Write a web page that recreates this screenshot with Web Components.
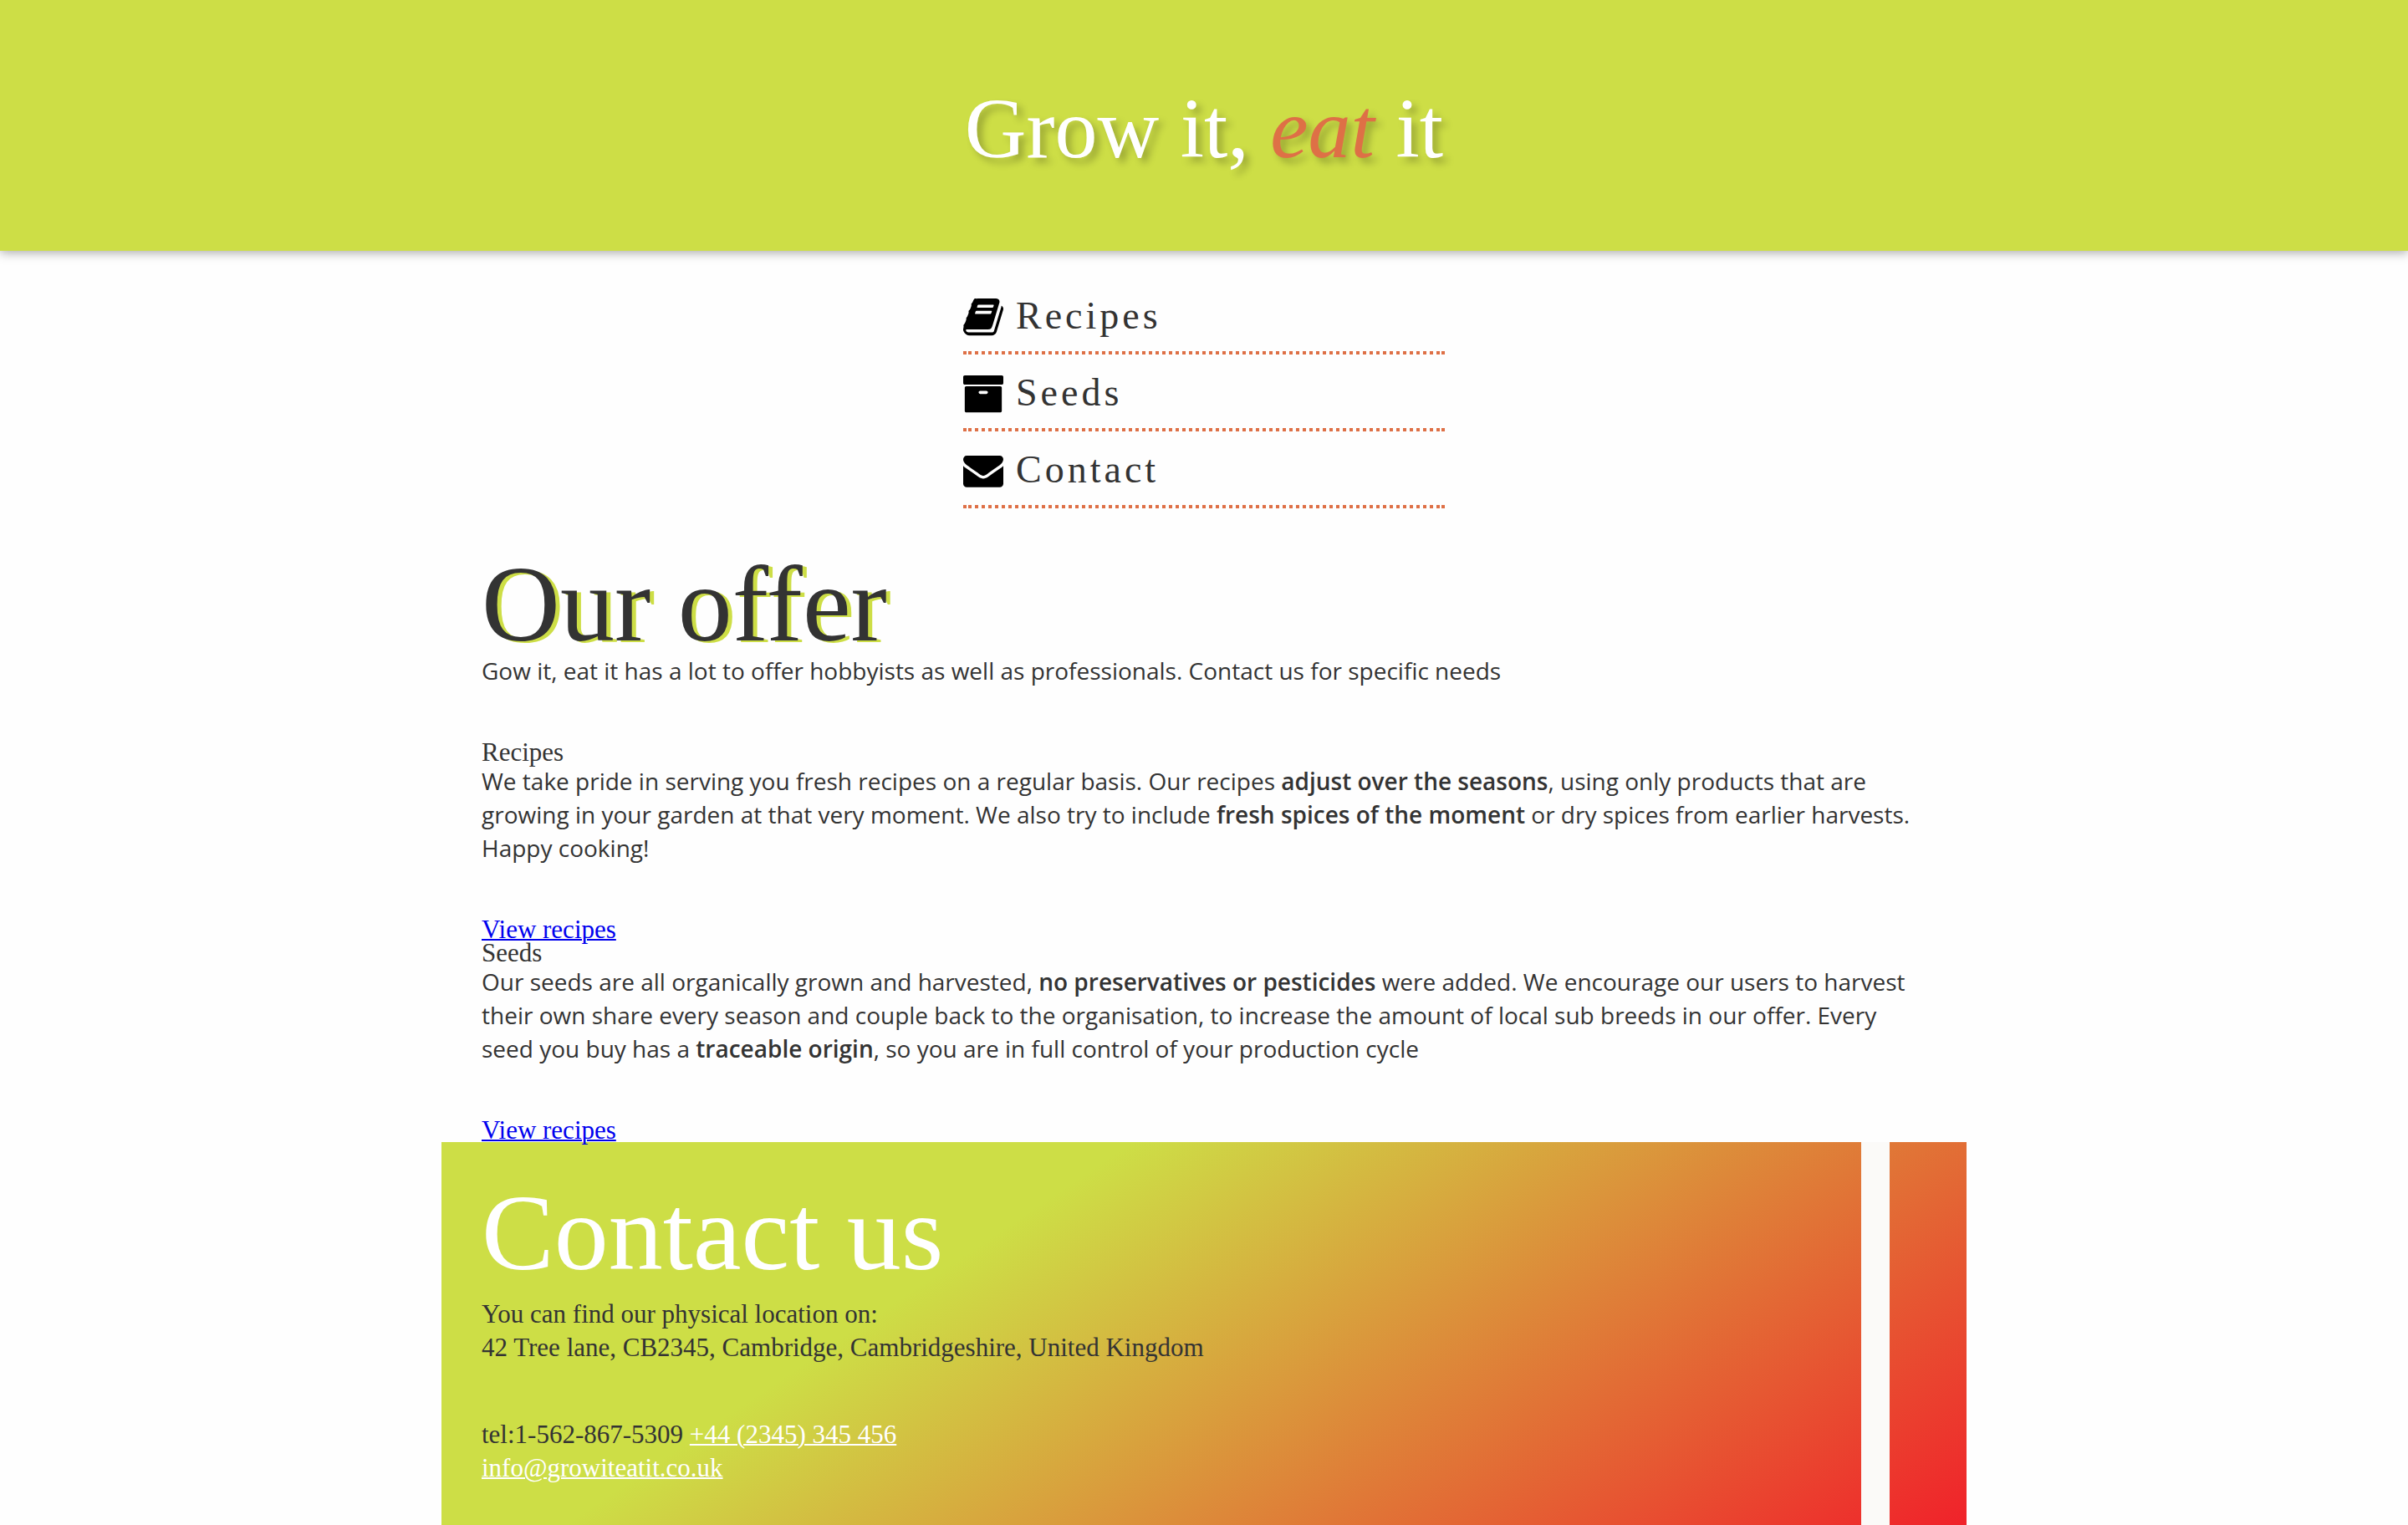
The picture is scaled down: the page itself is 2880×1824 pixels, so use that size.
<!DOCTYPE html>
<html lang="en">
<head>
<meta charset="utf-8">
<title>Grow it, eat it</title>
<style>
html {
  --lime: #cdde46;
  --orange: #de7046;
  --serif: "Palatino Linotype", Palatino, "Liberation Serif", serif;
  --sans: "Trebuchet MS", "Open Sans", sans-serif;
}
body { margin: 0; background: #fefefe; color: #333; font: 31px/28px var(--serif); }
main { box-sizing: content-box; width: 60%; margin: 0 auto; }
strong { font-weight: 600; }
</style>
</head>
<body>
<site-header>Grow it, <em>eat</em> it</site-header>

<site-nav>
  <nav-item href="#recipes" icon="book">Recipes</nav-item>
  <nav-item href="#seeds" icon="archive">Seeds</nav-item>
  <nav-item href="#contact" icon="envelope">Contact</nav-item>
</site-nav>

<main>
  <offer-section heading="Our offer">
    <span slot="intro">Gow it, eat it has a lot to offer hobbyists as well as professionals. Contact us for specific needs</span>
    <offer-item id="recipes" heading="Recipes" link="View recipes">We take pride in serving you fresh recipes on a regular basis. Our recipes <strong>adjust over the seasons</strong>, using only products that are growing in your garden at that very moment. We also try to include <strong>fresh spices of the moment</strong> or dry spices from earlier harvests. Happy cooking!</offer-item>
    <offer-item id="seeds" heading="Seeds" link="View recipes">Our seeds are all organically grown and harvested, <strong>no preservatives or pesticides</strong> were added. We encourage our users to harvest their own share every season and couple back to the organisation, to increase the amount of local sub breeds in our offer. Every seed you buy has a <strong>traceable origin</strong>, so you are in full control of your production cycle</offer-item>
  </offer-section>
  <contact-section id="contact"></contact-section>
</main>

<script>
const define = (name, render) => customElements.define(name, class extends HTMLElement {
  constructor() {
    super();
    this.attachShadow({ mode: "open" });
  }
  connectedCallback() {
    this.shadowRoot.innerHTML = render(this);
  }
});

const ICONS = {
  book: `<svg viewBox="64 -184 1664 1941" aria-hidden="true"><path d="M1703 478q40 57 18 129l-275 906q-19 64-76.500 107.500t-122.500 43.500h-923q-77 0-148.500-53.500t-99.500-131.500q-24-67-2-127 0-4 3-27t4-37q1-8-3-21.500t-3-19.500q2-11 8-21t16.500-23.500 16.500-23.500q23-38 45-91.500t30-91.500q3-10 .5-30t-.5-28q3-11 17-28t17-23q21-36 42-92t25-90q1-9-2.500-32t.5-28q4-13 22-30.500t22-22.500q19-26 42.500-84.500t27.500-96.500q1-8-3-25.500t-2-26.500q2-8 9-18t18-23 17-21q8-12 16.500-30.500t15-35 16-36 19.500-32 26.500-23.500 36-11.500 47.500 5.500l-1 3q38-9 51-9h761q74 0 114 56t18 130l-274 906q-36 119-71.500 153.500t-128.500 34.500h-869q-27 0-38 15-11 16-1 43 24 70 144 70h923q29 0 56-15.500t35-41.500l300-987q7-22 5-57 38 15 59 43zm-1064 2q-4 13 2 22.500t20 9.500h608q13 0 25.500-9.500t16.500-22.500l21-64q4-13-2-22.500t-20-9.500h-608q-13 0-25.500 9.500t-16.500 22.500zm-83 256q-4 13 2 22.500t20 9.500h608q13 0 25.500-9.500t16.500-22.500l21-64q4-13-2-22.500t-20-9.500h-608q-13 0-25.500 9.500t-16.500 22.500z"/></svg>`,
  archive: `<svg viewBox="64 -184 1664 1941" aria-hidden="true"><path d="M1088 832q0-26-19-45t-45-19h-256q-26 0-45 19t-19 45 19 45 45 19h256q26 0 45-19t19-45zm576-192v960q0 26-19 45t-45 19h-1408q-26 0-45-19t-19-45v-960q0-26 19-45t45-19h1408q26 0 45 19t19 45zm64-448v256q0 26-19 45t-45 19h-1536q-26 0-45-19t-19-45v-256q0-26 19-45t45-19h1536q26 0 45 19t19 45z"/></svg>`,
  envelope: `<svg viewBox="0 -229 1792 2091" aria-hidden="true"><path d="M1792 710v794q0 66-47 113t-113 47h-1472q-66 0-113-47t-47-113v-794q44 49 101 87 362 246 497 345 57 42 92.500 65.500t94.500 48 110 24.500h2q51 0 110-24.500t94.500-48 92.500-65.500q170-123 498-345 57-39 100-87zm0-294q0 79-49 151t-122 123q-376 261-468 325-10 7-42.500 30.500t-54 38-52 32.500-57.500 27-50 9h-2q-23 0-50-9t-57.500-27-52-32.500-54-38-42.500-30.500q-91-64-262-182.500t-205-142.500q-62-42-117-115.500t-55-136.500q0-78 41.500-130t118.500-52h1472q65 0 112.500 47t47.500 113z"/></svg>`
};

define("site-header", () => `
  <style>
    :host { display: block; background: var(--lime); box-shadow: 0 2px 12px rgba(0,0,0,.35); }
    header { display: flex; justify-content: center; padding: 94px 0 86px; }
    h1 { margin: 0; font-size: 102px; line-height: 120px; font-weight: 400; color: #fff; text-shadow: 6px 6px 8px rgba(0,0,0,.25); }
    ::slotted(em) { color: var(--orange); }
  </style>
  <header><h1><slot></slot></h1></header>`);

define("site-nav", () => `
  <style>
    :host { display: block; width: 20%; margin: 32px auto 54px; }
    nav { display: flex; flex-direction: column; }
  </style>
  <nav><slot></slot></nav>`);

define("nav-item", el => `
  <style>
    :host { display: block; }
    a { display: flex; align-items: flex-start; gap: 15px; height: 88px; font-size: 46px; line-height: 48px; letter-spacing: 4px; color: inherit; text-decoration: none; }
    svg { width: 48px; height: 56px; margin-top: 16px; fill: #000; flex: none; }
    span { margin-top: 22px; }
    i {
      display: block; height: 4px;
      background:
        linear-gradient(var(--orange) 0 0) left / 4px 4px no-repeat,
        linear-gradient(var(--orange) 0 0) right / 4px 4px no-repeat,
        linear-gradient(90deg, var(--orange) 50%, transparent 50%) 6px 0 / 8px 4px repeat-x;
    }
  </style>
  <a href="${el.getAttribute("href")}">${ICONS[el.getAttribute("icon")]}<span><slot></slot></span></a>
  <i></i>`);

define("offer-section", el => `
  <style>
    :host { display: block; }
    h2 { margin: 0; font-size: 130px; line-height: 120px; font-weight: 400; text-shadow: 5px 2px 0 var(--lime); }
    p { margin: 0 0 64px; font: 28px/40px var(--sans); }
  </style>
  <section>
    <h2>${el.getAttribute("heading")}</h2>
    <p><slot name="intro"></slot></p>
    <slot></slot>
  </section>`);

define("offer-item", el => `
  <style>
    :host { display: block; }
    h3 { margin: 0; font: inherit; }
    p { margin: 0 0 64px; font: 28px/40px var(--sans); }
    a { display: table; color: #00e; text-decoration-thickness: 2px; }
  </style>
  <article>
    <h3>${el.getAttribute("heading")}</h3>
    <p><slot></slot></p>
    <a href="#${el.id}">${el.getAttribute("link")}</a>
  </article>`);

define("contact-section", () => `
  <style>
    :host { display: block; margin: 0 -48px; background: linear-gradient(146deg, var(--lime) 33%, #f0222a 100%); }
    section { display: flex; }
    .details { flex: 1; padding: 48px; line-height: 40px; }
    .strip { width: 34px; margin-right: 92px; background: #fbfaf8; }
    h2 { margin: 0 0 18px; font-size: 130px; line-height: 120px; font-weight: 400; color: #fff; }
    address { font-style: normal; }
    p { margin: 0; }
    .reach { margin-top: 64px; }
    a { color: #fff; text-decoration-thickness: 2px; }
  </style>
  <section>
    <div class="details">
      <h2>Contact us</h2>
      <address>
        <p>You can find our physical location on:</p>
        <p>42 Tree lane, CB2345, Cambridge, Cambridgeshire, United Kingdom</p>
        <p class="reach">tel:1-562-867-5309 <a href="tel:+442345345456">+44 (2345) 345 456</a></p>
        <p><a href="mailto:info@growiteatit.co.uk">info@growiteatit.co.uk</a></p>
      </address>
    </div>
    <div class="strip"></div>
  </section>`);
</script>
</body>
</html>
